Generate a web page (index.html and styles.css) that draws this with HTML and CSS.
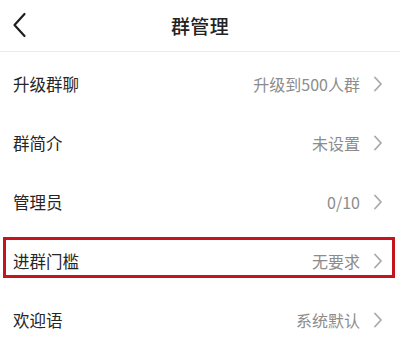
FILE: index.html
```html
<!DOCTYPE html>
<html lang="zh-CN">
<head>
<meta charset="utf-8">
<link rel="stylesheet" href="styles.css">
</head>
<body>
<div class="page">
  <header class="nav">
    <div class="nav-left">
      <svg class="back" width="16" height="26" viewBox="0 0 16 26"><polyline points="12.5,2 2.5,13 12.5,24" fill="none" stroke="#1e1e1e" stroke-width="2.2" stroke-linecap="round" stroke-linejoin="round"/></svg>
    </div>
    <div class="title">群管理</div>
    <div class="nav-right"></div>
  </header>
  <ul class="list">
    <li class="row"><span class="label">升级群聊</span><span class="value">升级到500人群</span><svg class="chev" width="10" height="16" viewBox="0 0 10 16"><polyline points="2,1.5 8,8 2,14.5" fill="none" stroke="#a9a9a9" stroke-width="1.8" stroke-linecap="round" stroke-linejoin="round"/></svg></li>
    <li class="row"><span class="label">群简介</span><span class="value">未设置</span><svg class="chev" width="10" height="16" viewBox="0 0 10 16"><polyline points="2,1.5 8,8 2,14.5" fill="none" stroke="#a9a9a9" stroke-width="1.8" stroke-linecap="round" stroke-linejoin="round"/></svg></li>
    <li class="row"><span class="label">管理员</span><span class="value">0/10</span><svg class="chev" width="10" height="16" viewBox="0 0 10 16"><polyline points="2,1.5 8,8 2,14.5" fill="none" stroke="#a9a9a9" stroke-width="1.8" stroke-linecap="round" stroke-linejoin="round"/></svg></li>
    <li class="row highlight"><span class="label">进群门槛</span><span class="value">无要求</span><svg class="chev" width="10" height="16" viewBox="0 0 10 16"><polyline points="2,1.5 8,8 2,14.5" fill="none" stroke="#a9a9a9" stroke-width="1.8" stroke-linecap="round" stroke-linejoin="round"/></svg></li>
    <li class="row"><span class="label">欢迎语</span><span class="value">系统默认</span><svg class="chev" width="10" height="16" viewBox="0 0 10 16"><polyline points="2,1.5 8,8 2,14.5" fill="none" stroke="#a9a9a9" stroke-width="1.8" stroke-linecap="round" stroke-linejoin="round"/></svg></li>
  </ul>
</div>
</body>
</html>
```
FILE: styles.css
```css
html, body {
  margin: 0;
  padding: 0;
  background: #ffffff;
}
body {
  font-family: "Noto Sans CJK SC", "Noto Sans", sans-serif;
  color: #262626;
}
.page {
  width: 400px;
  height: 358px;
  overflow: hidden;
  background: #ffffff;
}
.nav {
  height: 51px;
  border-bottom: 1px solid #ebebeb;
  display: grid;
  grid-template-columns: 1fr auto 1fr;
  align-items: center;
}
.nav-left {
  display: flex;
  align-items: center;
  padding-left: 12px;
}
.back {
  display: block;
  margin-top: -2px;
}
.title {
  font-size: 19px;
  font-weight: 500;
  color: #222222;
  letter-spacing: 0.3px;
  margin-top: -1px;
}
.list {
  list-style: none;
  margin: 0;
  padding: 2px 0 0 0;
}
.row {
  position: relative;
  height: 59px;
  display: flex;
  align-items: center;
  padding: 0 17px 0 13px;
}
.label {
  flex: 1;
  font-size: 16.5px;
  color: #262626;
}
.value {
  font-size: 16px;
  color: #8c8c8c;
  margin-right: 13px;
}
.chev {
  display: block;
}
.highlight::after {
  content: "";
  position: absolute;
  left: 3px;
  right: 5px;
  top: 6px;
  height: 41px;
  box-sizing: border-box;
  border: 3.5px solid #c4151c;
  pointer-events: none;
}
```
